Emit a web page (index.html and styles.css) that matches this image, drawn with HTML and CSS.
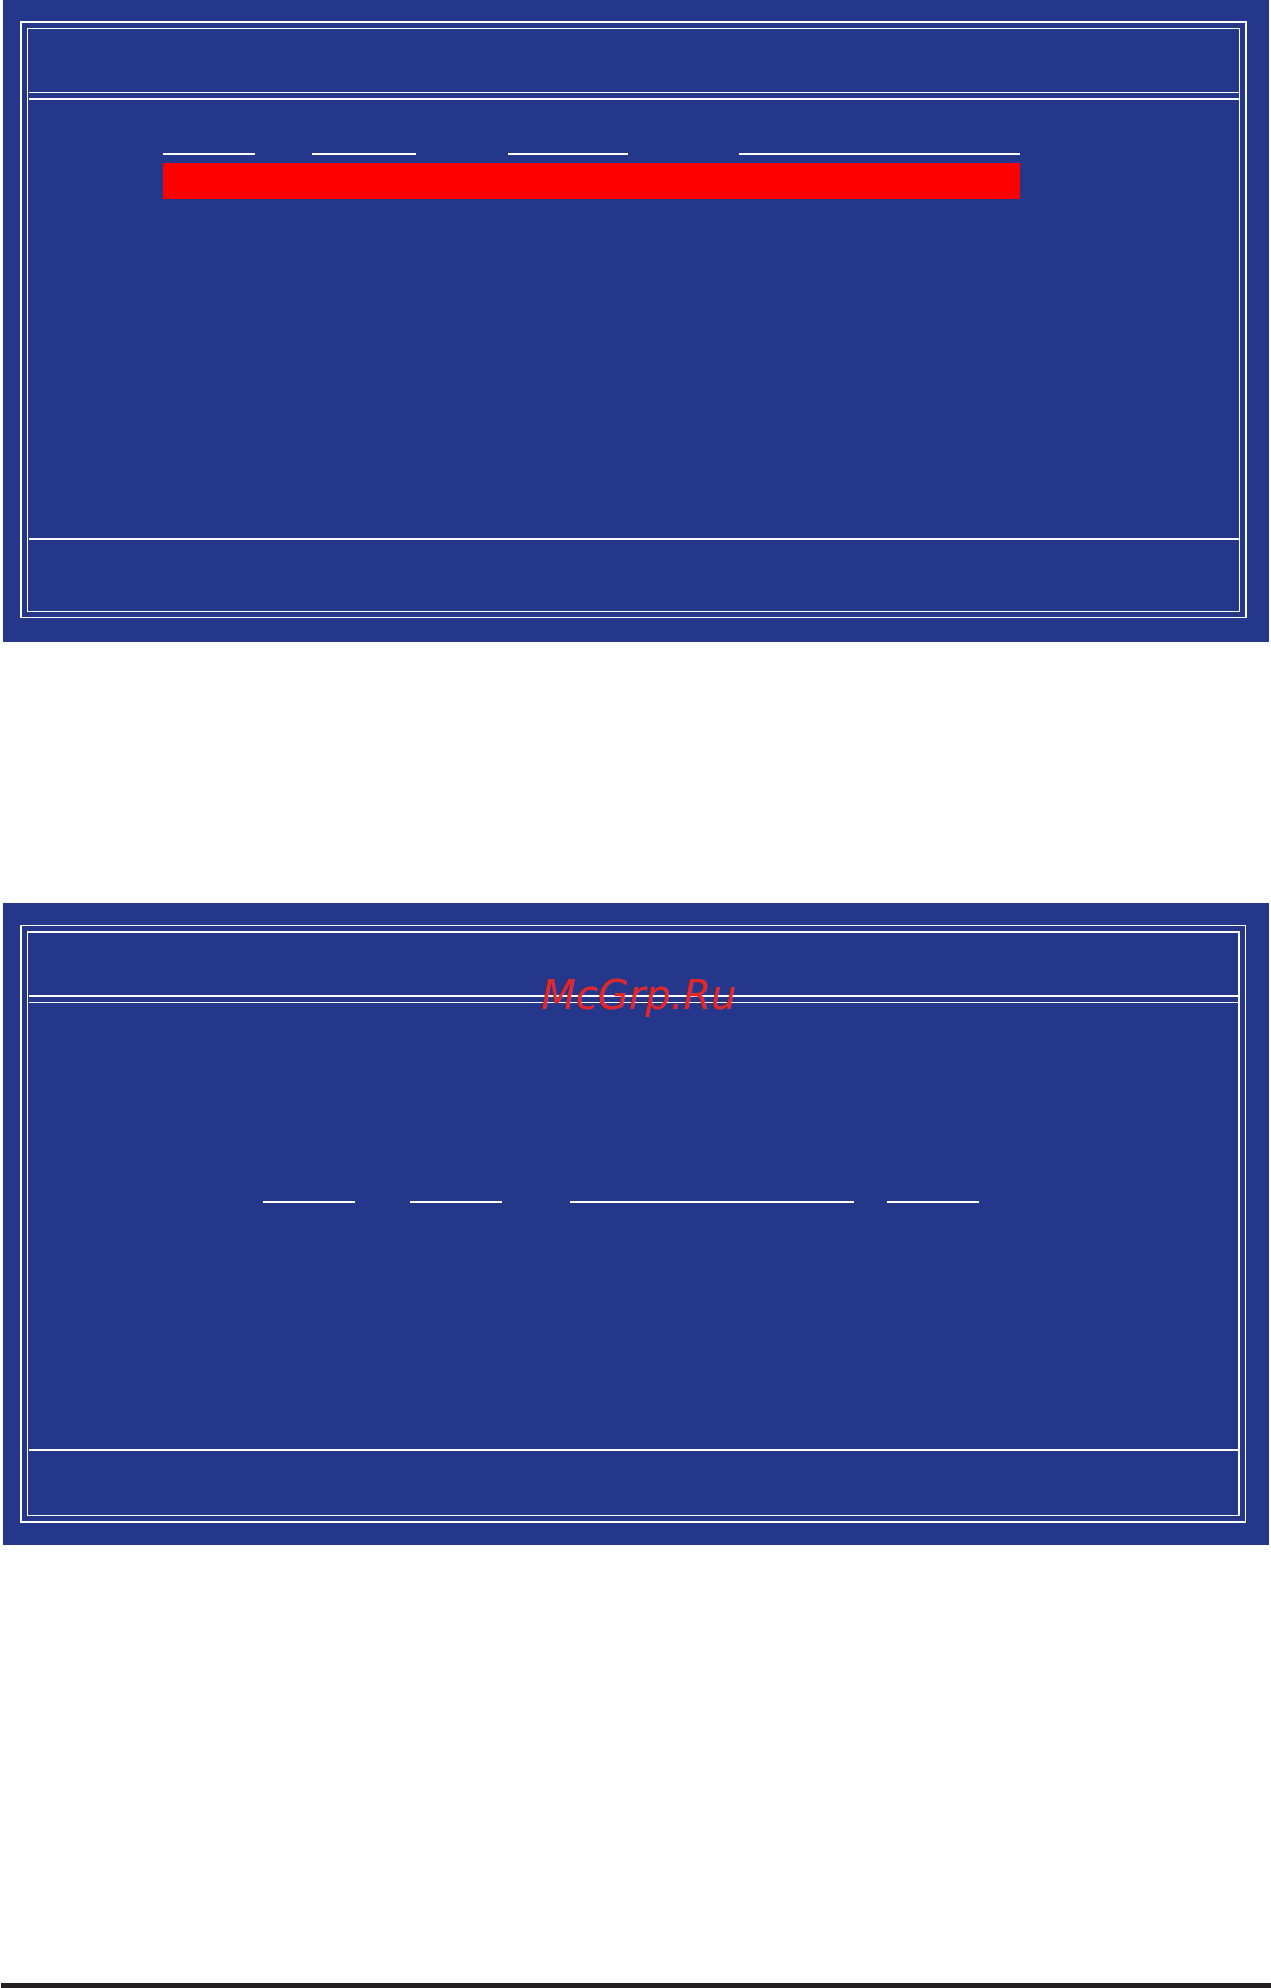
FILE: index.html
```html
<!DOCTYPE html>
<html lang="ru">
<head>
<meta charset="utf-8">
<title>BIOS screens</title>
<link rel="stylesheet" href="styles.css">
</head>
<body>
<div class="page">
  <section class="screen screen-one">
    <div class="frame frame-one">
      <div class="inner inner-one">
        <div class="header header-one"></div>
        <div class="rule thin"></div>
        <div class="rule-gap"></div>
        <div class="rule thick"></div>
        <div class="content content-one">
          <div class="cols cols-one">
            <span class="col c1"></span>
            <span class="col c2"></span>
            <span class="col c3"></span>
            <span class="col c4"></span>
          </div>
          <div class="highlight"></div>
        </div>
        <div class="rule thick"></div>
        <div class="footer footer-one"></div>
      </div>
    </div>
  </section>

  <section class="screen screen-two">
    <div class="frame frame-two">
      <div class="inner inner-two">
        <div class="header header-two"></div>
        <div class="rule thick"></div>
        <div class="rule-gap"></div>
        <div class="rule thin"></div>
        <div class="content content-two">
          <div class="cols cols-two">
            <span class="col d1"></span>
            <span class="col d2"></span>
            <span class="col d3"></span>
            <span class="col d4"></span>
          </div>
        </div>
        <div class="rule thick"></div>
        <div class="footer footer-two"></div>
      </div>
    </div>
    <div class="watermark">McGrp.Ru</div>
  </section>

  <div class="spacer"></div>
  <div class="bottom-bar"></div>
</div>
</body>
</html>
```

FILE: styles.css
```css
html, body {
  margin: 0;
  padding: 0;
  background: #ffffff;
}

.page {
  width: 1271px;
  height: 1988px;
  display: flex;
  flex-direction: column;
  overflow: hidden;
}

.screen {
  position: relative;
  margin-left: 3px;
  width: 1266px;
  height: 642px;
  box-sizing: border-box;
  background: #25378b;
  display: flex;
  flex-direction: column;
}

.screen-one {
  padding: 21px 22px 0 17px;
}

.screen-two {
  margin-top: 261px;
  padding: 22px 23px 0 17px;
}

.frame {
  box-sizing: border-box;
  border-style: solid;
  border-color: #ffffff;
  padding: 5px;
}

.frame-one {
  border-width: 2px 2px 1px 2px;
}

.frame-two {
  border-width: 1px 1px 2px 2px;
}

.inner {
  border-style: solid;
  border-color: #ffffff;
  display: flex;
  flex-direction: column;
}

.inner-one {
  border-width: 1px;
}

.inner-two {
  border-width: 2px 2px 1px 1px;
}

.header-one { height: 63px; }
.header-two { height: 62px; }

.rule {
  margin-left: 1px;
  background: #ffffff;
}

.rule.thin { height: 1px; }
.rule.thick { height: 2px; }
.rule-gap { height: 5px; }

.content {
  display: flex;
  flex-direction: column;
}

.content-one {
  height: 438px;
  padding-top: 53px;
  box-sizing: border-box;
}

.content-two {
  height: 446px;
  padding-top: 198px;
  box-sizing: border-box;
}

.cols {
  display: flex;
  height: 2px;
}

.col {
  display: block;
  height: 2px;
  background: #ffffff;
}

.c1 { margin-left: 135px; width: 92px; }
.c2 { margin-left: 57px; width: 104px; }
.c3 { margin-left: 92px; width: 120px; }
.c4 { margin-left: 111px; width: 281px; }

.highlight {
  margin-top: 8px;
  margin-left: 135px;
  width: 857px;
  height: 36px;
  background: #ff0000;
}

.d1 { margin-left: 235px; width: 92px; }
.d2 { margin-left: 55px; width: 92px; }
.d3 { margin-left: 68px; width: 284px; }
.d4 { margin-left: 33px; width: 92px; }

.footer-one { height: 71px; }
.footer-two { height: 64px; }

.watermark {
  position: absolute;
  top: 72px;
  left: 538px;
  font-family: "DejaVu Sans", "Liberation Sans", sans-serif;
  font-style: italic;
  font-size: 40px;
  line-height: 40px;
  color: #e0282c;
  white-space: nowrap;
}

.spacer {
  flex: 1;
}

.bottom-bar {
  margin-left: 1px;
  height: 5px;
  background: #231f20;
}
```
